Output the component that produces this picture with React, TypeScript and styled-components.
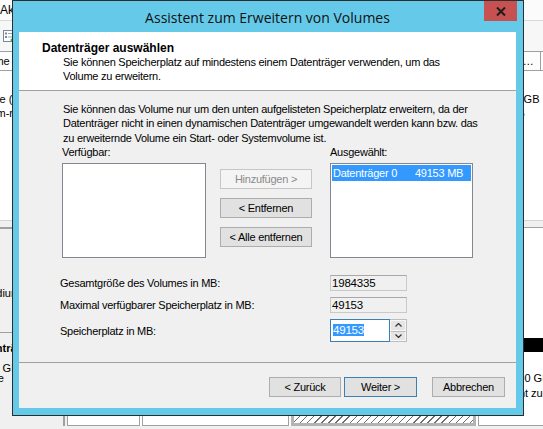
import React from "react";
import styled, { createGlobalStyle } from "styled-components";

const GlobalStyle = createGlobalStyle`
  * { box-sizing: border-box; }
  html, body { margin: 0; padding: 0; }
  body {
    width: 543px;
    height: 429px;
    overflow: hidden;
    background: #f0f0f0;
    font-family: "Liberation Sans", Arial, sans-serif;
    color: #000;
  }
`;

/* ---------- management console behind the wizard ---------- */

const Console = styled.div`
  position: relative;
  width: 543px;
  height: 429px;
  overflow: hidden;
  display: flex;
  flex-direction: column;
  font-size: 12px;
`;

const MenuBar = styled.div`
  height: 21px;
  flex: none;
  display: flex;
  align-items: center;
  gap: 16px;
  background: #fbfbfb;
  border-bottom: 1px solid #d9d9d9;
`;

const Toolbar = styled.div`
  height: 31px;
  flex: none;
  display: flex;
  align-items: center;
  padding-left: 3px;
  background: #f7f7f7;
  border-bottom: 1px solid #a0a0a0;
`;

const columns = "120px 70px 70px 90px 100px 68px 54px 1fr";

const ListView = styled.div`
  flex: none;
  margin-left: -31px;
  width: 620px;
  display: flex;
  flex-direction: column;
  font-size: 11px;
`;

const ListHeader = styled.div`
  height: 19px;
  display: grid;
  grid-template-columns: ${columns};
  background: #f4f4f4;
  border-bottom: 1px solid #a0a0a0;
`;

const HeaderCell = styled.div`
  padding: 0 4px;
  line-height: 18px;
  border-right: 1px solid #a0a0a0;
  background: #fdfdfd;
  white-space: nowrap;
  overflow: hidden;
  text-overflow: ellipsis;
`;

const ListBody = styled.div`
  height: 149px;
  background: #fff;
  padding-top: 21px;
`;

const ListRow = styled.div`
  height: 14px;
  display: grid;
  grid-template-columns: ${columns};
  line-height: 14px;
`;

const ListCell = styled.div<{ $pad?: number }>`
  padding-left: ${(p) => p.$pad ?? 0}px;
  white-space: nowrap;
  overflow: hidden;
`;

const Splitter = styled.div`
  height: 8px;
  flex: none;
  background: #f0f0f0;
  border-top: 1px solid #d4d4d4;
  border-bottom: 1px solid #a0a0a0;
`;

const DiskView = styled.div`
  flex: 1;
  margin-left: -31px;
  display: flex;
  flex-direction: column;
  background: #f0f0f0;
  font-size: 11px;
`;

const DiskRow = styled.div<{ $height: number }>`
  height: ${(p) => p.$height}px;
  flex: none;
  display: flex;
  gap: 2px;
`;

const DiskLabel = styled.div<{ $top: number; $indent?: number }>`
  width: 96px;
  flex: none;
  padding: ${(p) => p.$top}px 0 0 ${(p) => p.$indent ?? 3}px;
  background: #f0f0f0;
  border-top: 1px solid #a0a0a0;
  border-right: 2px solid #a0a0a0;
  line-height: 10px;
  white-space: nowrap;
  overflow: hidden;
  display: flex;
  flex-direction: column;
`;

const DiskName = styled.span`
  font-weight: bold;
`;

const Partitions = styled.div`
  flex: 1;
  display: flex;
  gap: 2px;
  padding: 6px 0 0;
  background: #fff;
`;

const Partition = styled.div<{ $width?: number; $selected?: boolean }>`
  width: ${(p) => (p.$width ? `${p.$width}px` : "auto")};
  flex: ${(p) => (p.$width ? "none" : "1")};
  display: flex;
  flex-direction: column;
  border: ${(p) => (p.$selected ? "3px solid #b3b3b3" : "1px solid #a0a0a0")};
  border-top: none;
  background: ${(p) =>
    p.$selected
      ? "repeating-linear-gradient(135deg, #fff 0 4px, #6d6d6d 4px 5px)"
      : "#fff"};
`;

const PartitionBar = styled.div<{ $free?: boolean }>`
  height: 14px;
  flex: none;
  background: ${(p) => (p.$free ? "#000" : "#1f3f8f")};
`;

const PartitionText = styled.div<{ $indent: number }>`
  padding: 19px 0 0 ${(p) => p.$indent}px;
  line-height: 15px;
  white-space: nowrap;
`;

/* ---------- wizard dialog ---------- */

const Dialog = styled.div`
  position: absolute;
  left: 12px;
  top: 0;
  width: 512px;
  height: 416px;
  border: 1px solid #2e2e2e;
  background: #65caea;
  padding: 0 7px 7px 6px;
  display: flex;
  flex-direction: column;
  font-size: 11px;
  letter-spacing: -0.25px;
`;

const TitleBar = styled.div`
  position: relative;
  height: 31px;
  flex: none;
  display: flex;
  align-items: center;
  justify-content: center;
`;

const Title = styled.div`
  font-family: "Open Sans", "Noto Sans", sans-serif;
  font-size: 14px;
  letter-spacing: 0;
  color: #111;
  margin-top: 1px;
`;

const CloseButton = styled.div`
  position: absolute;
  top: 0;
  right: -1px;
  width: 33px;
  height: 20px;
  background: #c75050;
  display: flex;
  align-items: center;
  justify-content: center;
`;

const Content = styled.div`
  flex: 1;
  display: flex;
  flex-direction: column;
  background: #f0f0f0;
  overflow: hidden;
`;

const Header = styled.div`
  height: 59px;
  flex: none;
  background: #fff;
  border-bottom: 1px solid #a0a0a0;
  padding: 9px 0 0 23px;
  line-height: 14px;
`;

const HeaderTitle = styled.div`
  font-size: 12px;
  font-weight: bold;
  letter-spacing: 0;
`;

const HeaderText = styled.div`
  padding-left: 21px;
`;

const Body = styled.div`
  flex: 1;
  padding-top: 10.5px;
  line-height: 14px;
`;

const Intro = styled.p`
  margin: 0 0 0 44px;
  line-height: 14.5px;
  white-space: nowrap;
`;

const Selector = styled.div`
  display: flex;
  margin-left: 43px;
`;

const ListColumn = styled.div<{ $width: number; $gap?: number }>`
  width: ${(p) => p.$width}px;
  margin-left: ${(p) => p.$gap ?? 0}px;
  display: flex;
  flex-direction: column;
  gap: 4px;
`;

const ListBox = styled.div`
  height: 95px;
  background: #fff;
  border: 1px solid #828790;
  padding: 1px;
`;

const ListItem = styled.div<{ $selected?: boolean }>`
  height: 16px;
  display: grid;
  grid-template-columns: 82px auto;
  padding-left: 1px;
  line-height: 16px;
  background: ${(p) => (p.$selected ? "#3399ff" : "transparent")};
  color: ${(p) => (p.$selected ? "#fff" : "#000")};
`;

const MoveButtons = styled.div`
  width: 92px;
  margin-left: 14px;
  padding-top: 24px;
  display: flex;
  flex-direction: column;
  gap: 9px;
`;

const Button = styled.button<{ $width?: number; $default?: boolean }>`
  width: ${(p) => (p.$width ? `${p.$width}px` : "100%")};
  height: 20px;
  padding: 0;
  font: inherit;
  letter-spacing: inherit;
  color: #000;
  background: #e1e1e1;
  border: 1px solid ${(p) => (p.$default ? "#3c7fb1" : "#adadad")};
  border-radius: 0;

  &:disabled {
    color: #8a8a8a;
    background: #f4f4f4;
    border-color: #c6c6c6;
  }
`;

const FieldGrid = styled.div`
  margin: 17px 0 0 41px;
  display: grid;
  grid-template-columns: 270px 77px;
  grid-template-rows: 16px 16px 23px;
  row-gap: 6px;
  align-items: center;
`;

const ReadOnlyField = styled.div`
  height: 16px;
  border: 1px solid #c9c9c9;
  border-top-color: #a8a8a8;
  background: #f0f0f0;
  padding-left: 1px;
  line-height: 14px;
  font-size: 11.5px;
  letter-spacing: -0.2px;
`;

const SpinBox = styled.div`
  height: 23px;
  display: flex;
`;

const SpinInput = styled.div`
  width: 60px;
  height: 23px;
  border: 1px solid #3c7fb1;
  background: #fff;
  padding: 3px 0 0 2px;
  font-size: 11.5px;
  letter-spacing: -0.2px;
  line-height: 15px;
`;

const Selection = styled.span`
  background: #3399ff;
  color: #fff;
`;

const SpinButtons = styled.div`
  width: 17px;
  display: flex;
  flex-direction: column;
  border: 1px solid #bdbdbd;
  border-left: none;
`;

const SpinButton = styled.div`
  flex: 1;
  display: flex;
  align-items: center;
  justify-content: center;
  background: #e5e5e5;
  border: 1px solid #f7f7f7;

  & + & {
    border-top: 1px solid #bdbdbd;
  }
`;

const Footer = styled.div`
  height: 46px;
  flex: none;
  border-top: 1px solid #a0a0a0;
  padding: 14px 11px 0 0;
  display: flex;
  justify-content: flex-end;
  gap: 3px;
`;

const Spacer = styled.div`
  width: 9px;
`;

const Chevron = ({ up }: { up?: boolean }) => (
  <svg width="7" height="4" viewBox="0 0 7 4">
    <polyline
      points={up ? "0.5,3.5 3.5,0.5 6.5,3.5" : "0.5,0.5 3.5,3.5 6.5,0.5"}
      fill="none"
      stroke="#333"
      strokeWidth="1.2"
    />
  </svg>
);

const ListIcon = () => (
  <svg width="11" height="12" viewBox="0 0 11 12">
    <rect x="0.5" y="0.5" width="10" height="11" fill="#fff" stroke="#7a8a99" />
    <rect x="2" y="2.5" width="2" height="2" fill="#7a8a99" />
    <rect x="2" y="6" width="2" height="2" fill="#7a8a99" />
    <line x1="5" y1="3.5" x2="9" y2="3.5" stroke="#9aa7b3" />
    <line x1="5" y1="7" x2="9" y2="7" stroke="#9aa7b3" />
    <circle cx="9" cy="10" r="1.5" fill="#3fae49" />
  </svg>
);

export default function App() {
  return (
    <>
      <GlobalStyle />
      <Console>
        <MenuBar>
          <span>Aktion</span>
          <span>Ansicht</span>
          <span>?</span>
        </MenuBar>
        <Toolbar>
          <ListIcon />
        </Toolbar>
        <ListView>
          <ListHeader>
            <HeaderCell>Volume</HeaderCell>
            <HeaderCell>Layout</HeaderCell>
            <HeaderCell>Typ</HeaderCell>
            <HeaderCell>Dateisystem</HeaderCell>
            <HeaderCell>Status</HeaderCell>
            <HeaderCell>Kapazität</HeaderCell>
            <HeaderCell>Freier Speicherplatz</HeaderCell>
            <HeaderCell>% frei</HeaderCell>
          </ListHeader>
          <ListBody>
            <ListRow>
              <ListCell>Volume (C:)</ListCell>
              <ListCell $pad={4}>Einfach</ListCell>
              <ListCell $pad={4}>Basis</ListCell>
              <ListCell $pad={4}>NTFS</ListCell>
              <ListCell $pad={4}>Fehlerfrei (Start...</ListCell>
              <ListCell $pad={4}>99,66 GB</ListCell>
              <ListCell $pad={6}>48,53 GB</ListCell>
              <ListCell $pad={4}>49 %</ListCell>
            </ListRow>
            <ListRow>
              <ListCell>System-reserviert</ListCell>
              <ListCell $pad={4}>Einfach</ListCell>
              <ListCell $pad={4}>Basis</ListCell>
              <ListCell $pad={4}>NTFS</ListCell>
              <ListCell $pad={4}>Fehlerfrei (System...</ListCell>
              <ListCell $pad={4}>350 MB</ListCell>
              <ListCell $pad={6}>69 MB</ListCell>
              <ListCell $pad={4}>20 %</ListCell>
            </ListRow>
          </ListBody>
        </ListView>
        <Splitter />
        <DiskView>
          <DiskRow $height={104}>
            <DiskLabel $top={59} $indent={12}>
              <span>Medium</span>
            </DiskLabel>
            <Partitions />
          </DiskRow>
          <DiskRow $height={94}>
            <DiskLabel $top={10}>
              <DiskName>Datenträger 0</DiskName>
              <span>Basis</span>
              <span>98,00 GB</span>
              <span>Online</span>
            </DiskLabel>
            <Partitions>
              <Partition $width={73}>
                <PartitionBar />
              </Partition>
              <Partition $width={147}>
                <PartitionBar />
              </Partition>
              <Partition $width={185} $selected>
                <PartitionBar />
              </Partition>
              <Partition>
                <PartitionBar $free />
                <PartitionText $indent={24}>
                  49,00 GB
                  <br />
                  Nicht zugeordnet
                </PartitionText>
              </Partition>
            </Partitions>
          </DiskRow>
        </DiskView>

        <Dialog>
          <TitleBar>
            <Title>Assistent zum Erweitern von Volumes</Title>
            <CloseButton>
              <svg width="10" height="9" viewBox="0 0 10 9">
                <path d="M1 0.5 L9 8.5 M9 0.5 L1 8.5" stroke="#1c1c1c" strokeWidth="2" />
              </svg>
            </CloseButton>
          </TitleBar>
          <Content>
            <Header>
              <HeaderTitle>Datenträger auswählen</HeaderTitle>
              <HeaderText>
                Sie können Speicherplatz auf mindestens einem Datenträger verwenden, um das
                <br />
                Volume zu erweitern.
              </HeaderText>
            </Header>
            <Body>
              <Intro>
                Sie können das Volume nur um den unten aufgelisteten Speicherplatz erweitern, da der
                <br />
                Datenträger nicht in einen dynamischen Datenträger umgewandelt werden kann bzw. das
                <br />
                zu erweiternde Volume ein Start- oder Systemvolume ist.
              </Intro>
              <Selector>
                <ListColumn $width={144}>
                  <span>Verfügbar:</span>
                  <ListBox />
                </ListColumn>
                <MoveButtons>
                  <Button disabled>Hinzufügen &gt;</Button>
                  <Button>&lt; Entfernen</Button>
                  <Button>&lt; Alle entfernen</Button>
                </MoveButtons>
                <ListColumn $width={143} $gap={18}>
                  <span>Ausgewählt:</span>
                  <ListBox>
                    <ListItem $selected>
                      <span>Datenträger 0</span>
                      <span>49153 MB</span>
                    </ListItem>
                  </ListBox>
                </ListColumn>
              </Selector>
              <FieldGrid>
                <span>Gesamtgröße des Volumes in MB:</span>
                <ReadOnlyField>1984335</ReadOnlyField>
                <span>Maximal verfügbarer Speicherplatz in MB:</span>
                <ReadOnlyField>49153</ReadOnlyField>
                <span>Speicherplatz in MB:</span>
                <SpinBox>
                  <SpinInput>
                    <Selection>49153</Selection>
                  </SpinInput>
                  <SpinButtons>
                    <SpinButton>
                      <Chevron up />
                    </SpinButton>
                    <SpinButton>
                      <Chevron />
                    </SpinButton>
                  </SpinButtons>
                </SpinBox>
              </FieldGrid>
            </Body>
            <Footer>
              <Button $width={72}>&lt; Zurück</Button>
              <Button $width={73} $default>
                Weiter &gt;
              </Button>
              <Spacer />
              <Button $width={73}>Abbrechen</Button>
            </Footer>
          </Content>
        </Dialog>
      </Console>
    </>
  );
}
